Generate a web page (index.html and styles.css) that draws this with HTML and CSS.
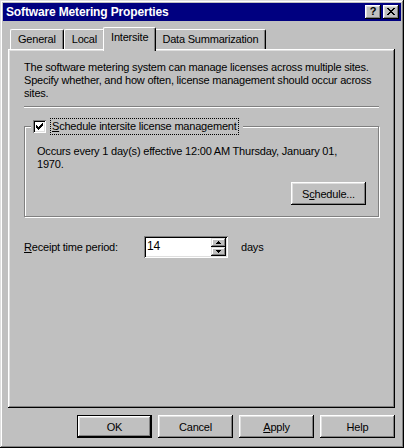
FILE: index.html
```html
<!doctype html>
<html lang="en">
    <head>
        <meta charset="UTF-8" />
        <title>Software Metering Properties</title>
        <link rel="stylesheet" href="styles.css">
    </head>
    <body>
        <div class="window">
            <div class="titlebar">
                <span class="title">Software Metering Properties</span>
                <div class="caption-buttons">
                    <button class="caption-btn help-btn">?</button>
                    <button class="caption-btn close-btn">
                        <svg width="8" height="7" viewBox="0 0 8 7" shape-rendering="crispEdges">
                            <path d="M0 0h2v1h-2zM6 0h2v1h-2zM1 1h2v1h-2zM5 1h2v1h-2zM2 2h4v1h-4zM3 3h2v1h-2zM2 4h4v1h-4zM1 5h2v1h-2zM5 5h2v1h-2zM0 6h2v1h-2zM6 6h2v1h-2z" fill="#000" />
                        </svg>
                    </button>
                </div>
            </div>

            <div class="dialog">
                <div class="tabs">
                    <div class="tab">General</div>
                    <div class="tab">Local</div>
                    <div class="tab active">Intersite</div>
                    <div class="tab">Data Summarization</div>
                </div>

                <div class="panel">
                    <p class="intro">
                        The software metering system can manage licenses across multiple sites.
                        Specify whether, and how often, license management should occur across
                        sites.
                    </p>
                    <div class="rule"></div>

                    <fieldset class="group">
                        <legend class="group-legend">
                            <span class="checkbox">
                                <svg width="7" height="7" viewBox="0 0 7 7" shape-rendering="crispEdges">
                                    <path d="M6 0h1v3h-1zM5 1h1v3h-1zM4 2h1v3h-1zM3 3h1v3h-1zM2 4h1v3h-1zM1 3h1v3h-1zM0 2h1v3h-1z" fill="#000" />
                                </svg>
                            </span>
                            <span class="check-label"><u>S</u>chedule intersite license management</span>
                        </legend>
                        <p class="occurs">
                            Occurs every 1 day(s) effective 12:00 AM Thursday, January 01,<br />1970.
                        </p>
                        <div class="group-actions">
                            <button class="btn">S<u>c</u>hedule...</button>
                        </div>
                    </fieldset>

                    <div class="receipt-row">
                        <label class="receipt-label"><u>R</u>eceipt time period:</label>
                        <div class="spin">
                            <span class="spin-value">14</span>
                            <div class="spin-buttons">
                                <span class="spin-btn">
                                    <svg width="5" height="3" viewBox="0 0 5 3" shape-rendering="crispEdges"><path d="M2 0h1v1h-1zM1 1h3v1h-3zM0 2h5v1h-5z" fill="#000" /></svg>
                                </span>
                                <span class="spin-btn">
                                    <svg width="5" height="3" viewBox="0 0 5 3" shape-rendering="crispEdges"><path d="M0 0h5v1h-5zM1 1h3v1h-3zM2 2h1v1h-1z" fill="#000" /></svg>
                                </span>
                            </div>
                        </div>
                        <span class="receipt-unit">days</span>
                    </div>
                </div>

                <div class="actions">
                    <button class="btn default">OK</button>
                    <button class="btn">Cancel</button>
                    <button class="btn"><u>A</u>pply</button>
                    <button class="btn">Help</button>
                </div>
            </div>
        </div>
    </body>
</html>
```

FILE: styles.css
```css
* {
    margin: 0;
    padding: 0;
    box-sizing: border-box;
}

body {
    font-family: "Liberation Sans", Arial, sans-serif;
    font-size: 11px;
    letter-spacing: -0.2px;
    color: #000;
    background: #c0c0c0;
}

u {
    text-decoration: underline;
    text-underline-offset: 1px;
}

.window {
    width: 404px;
    height: 448px;
    padding: 3px;
    background: #c0c0c0;
    box-shadow:
        inset -1px -1px #000,
        inset 1px 1px #dfdfdf,
        inset -2px -2px #808080,
        inset 2px 2px #fff;
    display: flex;
    flex-direction: column;
}

.titlebar {
    height: 18px;
    background: #000080;
    display: flex;
    align-items: center;
    justify-content: space-between;
    padding: 0 2px 0 3px;
}

.title {
    color: #fff;
    font-weight: bold;
    font-size: 12px;
    letter-spacing: -0.15px;
}

.caption-buttons {
    display: flex;
    gap: 2px;
}

.caption-btn {
    width: 16px;
    height: 14px;
    border: none;
    background: #c0c0c0;
    box-shadow:
        inset -1px -1px #000,
        inset 1px 1px #fff,
        inset -2px -2px #808080,
        inset 2px 2px #dfdfdf;
    display: flex;
    align-items: center;
    justify-content: center;
    font-family: "Liberation Sans", Arial, sans-serif;
    font-weight: bold;
    font-size: 11px;
    line-height: 1;
    padding-bottom: 1px;
}

.dialog {
    flex: 1;
    display: flex;
    flex-direction: column;
    padding: 6px 6px 7px 5px;
}

/* tab strip */
.tabs {
    display: flex;
    align-items: flex-end;
    height: 24px;
    margin-bottom: -2px;
    padding-left: 2px;
    position: relative;
    z-index: 1;
}

.tab {
    height: 20px;
    margin-bottom: 2px;
    padding: 0 7px 1px;
    display: flex;
    align-items: center;
    background: #c0c0c0;
    border-top: 1px solid #fff;
    border-left: 1px solid #fff;
    border-right: 1px solid #000;
    border-radius: 2px 2px 0 0;
    box-shadow: inset -1px 0 #808080;
    white-space: nowrap;
}

.tab.active {
    height: 24px;
    margin: 0 -2px;
    padding: 0 7px 5px;
    position: relative;
    z-index: 2;
}

.panel {
    flex: 1;
    padding: 12px 16px 0 16px;
    background: #c0c0c0;
    box-shadow:
        inset -1px -1px #000,
        inset 1px 1px #fff,
        inset -2px -2px #808080,
        inset 2px 2px #dfdfdf;
}

.intro {
    line-height: 13px;
}

.rule {
    height: 2px;
    margin-top: 6px;
    border-top: 1px solid #808080;
    border-bottom: 1px solid #fff;
}

/* group box */
.group {
    margin-top: 10px;
    padding: 0 12px 11px;
    border: 1px solid #808080;
    box-shadow:
        1px 1px #fff,
        inset 1px 1px #fff;
}

.group-legend {
    display: flex;
    align-items: center;
    margin-left: -6px;
    padding: 0 4px 0 2px;
    background: #c0c0c0;
}

.checkbox {
    width: 13px;
    height: 13px;
    background: #fff;
    box-shadow:
        inset 1px 1px #808080,
        inset -1px -1px #fff,
        inset 2px 2px #000,
        inset -2px -2px #dfdfdf;
    display: flex;
    align-items: center;
    justify-content: center;
}

.check-label {
    margin-left: 4px;
    padding: 1px 1px 2px;
    border: 1px dotted #000;
    line-height: 12px;
}

.occurs {
    margin-top: 10px;
    line-height: 13px;
}

.group-actions {
    display: flex;
    justify-content: flex-end;
    margin-top: 11px;
}

/* buttons */
.btn {
    width: 75px;
    height: 23px;
    border: none;
    background: #c0c0c0;
    font: inherit;
    letter-spacing: inherit;
    color: #000;
    box-shadow:
        inset -1px -1px #000,
        inset 1px 1px #fff,
        inset -2px -2px #808080,
        inset 2px 2px #dfdfdf;
}

.btn.default {
    box-shadow:
        inset 0 0 0 1px #000,
        inset -2px -2px #000,
        inset 2px 2px #fff,
        inset -3px -3px #808080,
        inset 3px 3px #dfdfdf;
}

/* receipt row */
.receipt-row {
    display: flex;
    align-items: center;
    margin-top: 19px;
}

.receipt-label {
    width: 120px;
}

.spin {
    width: 84px;
    height: 22px;
    padding: 2px;
    display: flex;
    align-items: stretch;
    background: #fff;
    box-shadow:
        inset 1px 1px #808080,
        inset -1px -1px #fff,
        inset 2px 2px #000,
        inset -2px -2px #dfdfdf;
}

.spin-value {
    flex: 1;
    padding-left: 1px;
    font-size: 12px;
    line-height: 16px;
}

.spin-buttons {
    width: 15px;
    display: flex;
    flex-direction: column;
}

.spin-btn {
    flex: 1;
    display: flex;
    align-items: center;
    justify-content: center;
    background: #c0c0c0;
    box-shadow:
        inset -1px -1px #000,
        inset 1px 1px #dfdfdf,
        inset -2px -2px #808080,
        inset 2px 2px #fff;
}

.receipt-unit {
    margin-left: 13px;
}

.actions {
    display: flex;
    justify-content: flex-end;
    gap: 6px;
    margin-top: 7px;
}
```
